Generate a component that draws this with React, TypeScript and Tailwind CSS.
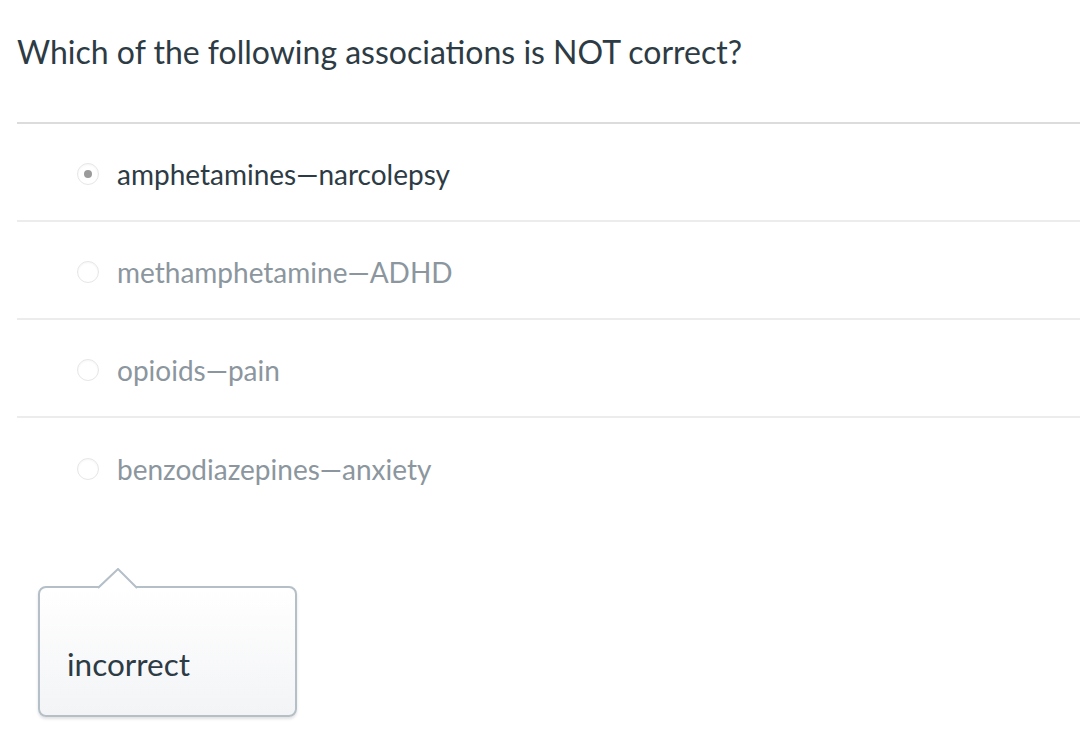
import React from "react";

const options = [
  { text: "amphetamines—narcolepsy", selected: true },
  { text: "methamphetamine—ADHD", selected: false },
  { text: "opioids—pain", selected: false },
  { text: "benzodiazepines—anxiety", selected: false },
];

export default function App() {
  return (
    <div className="w-[1080px] h-[740px] bg-white overflow-hidden" style={{ fontFamily: "Lato, 'Open Sans', sans-serif" }}>
      <div className="pl-[17px] pt-[30px]">
        <h1 className="text-[32px] leading-[44px] text-[#2d3b45] font-normal">
          Which of the following associations is NOT correct?
        </h1>
        <div className="mt-[48px] border-t-2 border-[#dcdcdc]">
          {options.map((o, i) => (
            <div
              key={i}
              className={`flex items-center h-[98px] pt-[4px] ${i < options.length - 1 ? "border-b-2 border-[#ececec]" : ""}`}
            >
              <div className="ml-[60px] w-[22px] h-[22px] rounded-full border border-[#e6e6e6] bg-white flex items-center justify-center shadow-[inset_0_1px_2px_rgba(0,0,0,0.04)]">
                {o.selected && <div className="w-[8px] h-[8px] rounded-full bg-[#9b9b9b]" />}
              </div>
              <span
                className={`ml-[18px] text-[28px] ${o.selected ? "text-[#2d3b45]" : "text-[#8b969e]"}`}
              >
                {o.text}
              </span>
            </div>
          ))}
        </div>
        <div className="relative ml-[21px] mt-[70px] w-[259px] h-[131px]">
          <div className="absolute inset-0 rounded-[8px] border-2 border-[#b4bfc8] bg-gradient-to-b from-white to-[#f3f4f6] shadow-[0_2px_3px_rgba(0,0,0,0.12)] flex items-center pl-[27px] pt-[26px]">
            <span className="text-[31.5px] text-[#2d3b45]">incorrect</span>
          </div>
          <svg className="absolute left-[60px] top-[-18px]" width="40" height="21" viewBox="0 0 40 21">
            <path d="M0 20 L20 1 L39 20" fill="#ffffff" stroke="#b4bfc8" strokeWidth="2" />
          </svg>
        </div>
      </div>
    </div>
  );
}
